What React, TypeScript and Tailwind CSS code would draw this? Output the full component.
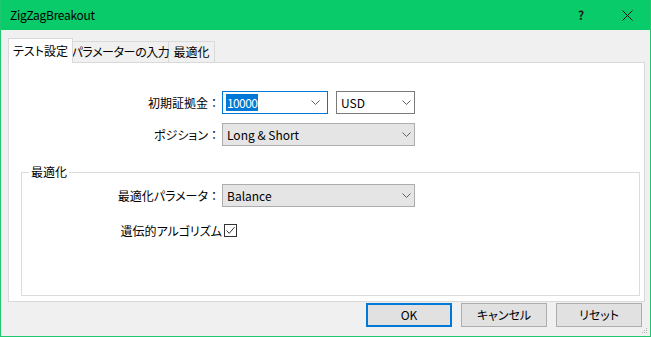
import React from "react";

const Chevron = () => (
  <svg width="9" height="5" viewBox="0 0 9 5" className="shrink-0">
    <path d="M0.5 0.5 L4.5 4.5 L8.5 0.5" fill="none" stroke="#606060" strokeWidth="1" />
  </svg>
);

const Label = ({ w, children }: { w: string; children: React.ReactNode }) => (
  <div className={`${w} text-right shrink-0 whitespace-nowrap`}>{children}</div>
);

export default function App() {
  return (
    <div className="relative w-[651px] h-[337px] flex flex-col bg-[#f0f0f0] border-l border-r border-b border-[#1fc86f] text-[12px] leading-[16px] text-black font-['Noto_Sans_CJK_JP','Noto_Sans',sans-serif] overflow-hidden">
      {/* Title bar */}
      <div className="h-[30px] shrink-0 flex items-center bg-[#0acb69]">
        <div className="pl-[9px] flex-1 text-[12px] tracking-[-0.3px]">ZigZagBreakout</div>
        <div className="w-[46px] h-[30px] flex items-center justify-center text-[12px] font-bold text-[#1a1a1a]">?</div>
        <div className="w-[46px] h-[30px] flex items-center justify-center">
          <svg width="11" height="11" viewBox="0 0 11 11">
            <path d="M0.5 0.5 L10.5 10.5 M10.5 0.5 L0.5 10.5" stroke="#111" strokeWidth="1" />
          </svg>
        </div>
      </div>

      {/* Body */}
      <div className="flex-1 flex flex-col pl-[7px] pr-[5px] pt-[8px]">
        {/* Tabs */}
        <div className="h-[24px] flex items-end shrink-0">
          <div className="relative z-10 h-[25px] w-[65px] -mb-px bg-white border border-b-0 border-[#d9d9d9] flex items-center justify-center whitespace-nowrap [font-feature-settings:'palt']">
            テスト設定
          </div>
          <div className="h-[21px] w-[96px] bg-[#f0f0f0] border-t border-r border-[#d9d9d9] flex items-center justify-center whitespace-nowrap tracking-[-0.4px] [font-feature-settings:'palt']">
            パラメーターの入力
          </div>
          <div className="h-[21px] w-[46px] bg-[#f0f0f0] border-t border-r border-[#d9d9d9] flex items-center justify-center whitespace-nowrap">
            最適化
          </div>
        </div>

        {/* Panel */}
        <div className="h-[240px] shrink-0 border border-[#d9d9d9] bg-white flex flex-col">
          {/* Row 1 */}
          <div className="mt-[28px] h-[23px] flex items-center">
            <Label w="w-[211px]">初期証拠金：</Label>
            <div className="ml-[2px] w-[106px] h-[23px] border border-[#0078d7] bg-white flex items-center pl-[3px] pr-[7px]">
              <span className="h-[17px] leading-[17px] px-[1px] bg-[#0078d7] text-white tracking-[-0.6px]">10000</span>
              <div className="flex-1" />
              <Chevron />
            </div>
            <div className="ml-[8px] w-[79px] h-[23px] border border-[#7a7a7a] bg-white flex items-center pl-[4px] pr-[3px]">
              <span className="flex-1">USD</span>
              <Chevron />
            </div>
          </div>

          {/* Row 2 */}
          <div className="mt-[9px] h-[23px] flex items-center">
            <Label w="w-[211px]">
              <span className="[font-feature-settings:'palt']">ポジション</span>：
            </Label>
            <div className="ml-[2px] w-[193px] h-[23px] border border-[#adadad] bg-[#e5e5e5] flex items-center pl-[4px] pr-[3px]">
              <span className="flex-1">Long &amp; Short</span>
              <Chevron />
            </div>
          </div>

          {/* Group box */}
          <fieldset className="mt-[18px] ml-[12px] w-[619px] h-[132px] border border-[#dcdcdc] p-0 m-0 flex flex-col">
            <legend className="ml-[7px] px-[2px] leading-[16px]">最適化</legend>
            <div className="mt-[4px] h-[23px] flex items-center">
              <Label w="w-[198px]">
                最適化<span className="[font-feature-settings:'palt']">パラメータ</span>：
              </Label>
              <div className="ml-[2px] w-[193px] h-[23px] border border-[#adadad] bg-[#e5e5e5] flex items-center pl-[4px] pr-[3px]">
                <span className="flex-1">Balance</span>
                <Chevron />
              </div>
            </div>
            <div className="mt-[15px] h-[17px] flex items-center">
              <Label w="w-[200px]">
                遺伝的<span className="[font-feature-settings:'palt']">アルゴリズム</span>
              </Label>
              <div className="ml-[2px] w-[13px] h-[13px] border border-[#333333] bg-white flex items-center justify-center">
                <svg width="11" height="11" viewBox="0 0 11 11">
                  <path d="M1.5 5.5 L4.2 8.3 L9.5 2.2" fill="none" stroke="#333333" strokeWidth="1" />
                </svg>
              </div>
            </div>
          </fieldset>
        </div>

        {/* Buttons */}
        <div className="mt-[1px] h-[24px] flex justify-end gap-[9px] pr-[3px] shrink-0">
          <button className="w-[86px] h-[24px] border-2 border-[#0078d7] bg-[#e1e1e1] flex items-center justify-center">
            OK
          </button>
          <button className="w-[86px] h-[24px] border border-[#adadad] bg-[#e1e1e1] flex items-center justify-center [font-feature-settings:'palt']">
            キャンセル
          </button>
          <button className="w-[86px] h-[24px] border border-[#adadad] bg-[#e1e1e1] flex items-center justify-center [font-feature-settings:'palt']">
            リセット
          </button>
        </div>
      </div>

      {/* Resize grip */}
      <svg className="absolute right-[2px] bottom-[2px]" width="7" height="7" viewBox="0 0 7 7">
        <rect x="5" y="1" width="1" height="1" fill="#b5b5b5" />
        <rect x="3" y="3" width="1" height="1" fill="#b5b5b5" />
        <rect x="5" y="3" width="1" height="1" fill="#b5b5b5" />
        <rect x="1" y="5" width="1" height="1" fill="#b5b5b5" />
        <rect x="3" y="5" width="1" height="1" fill="#b5b5b5" />
        <rect x="5" y="5" width="1" height="1" fill="#b5b5b5" />
      </svg>
    </div>
  );
}
